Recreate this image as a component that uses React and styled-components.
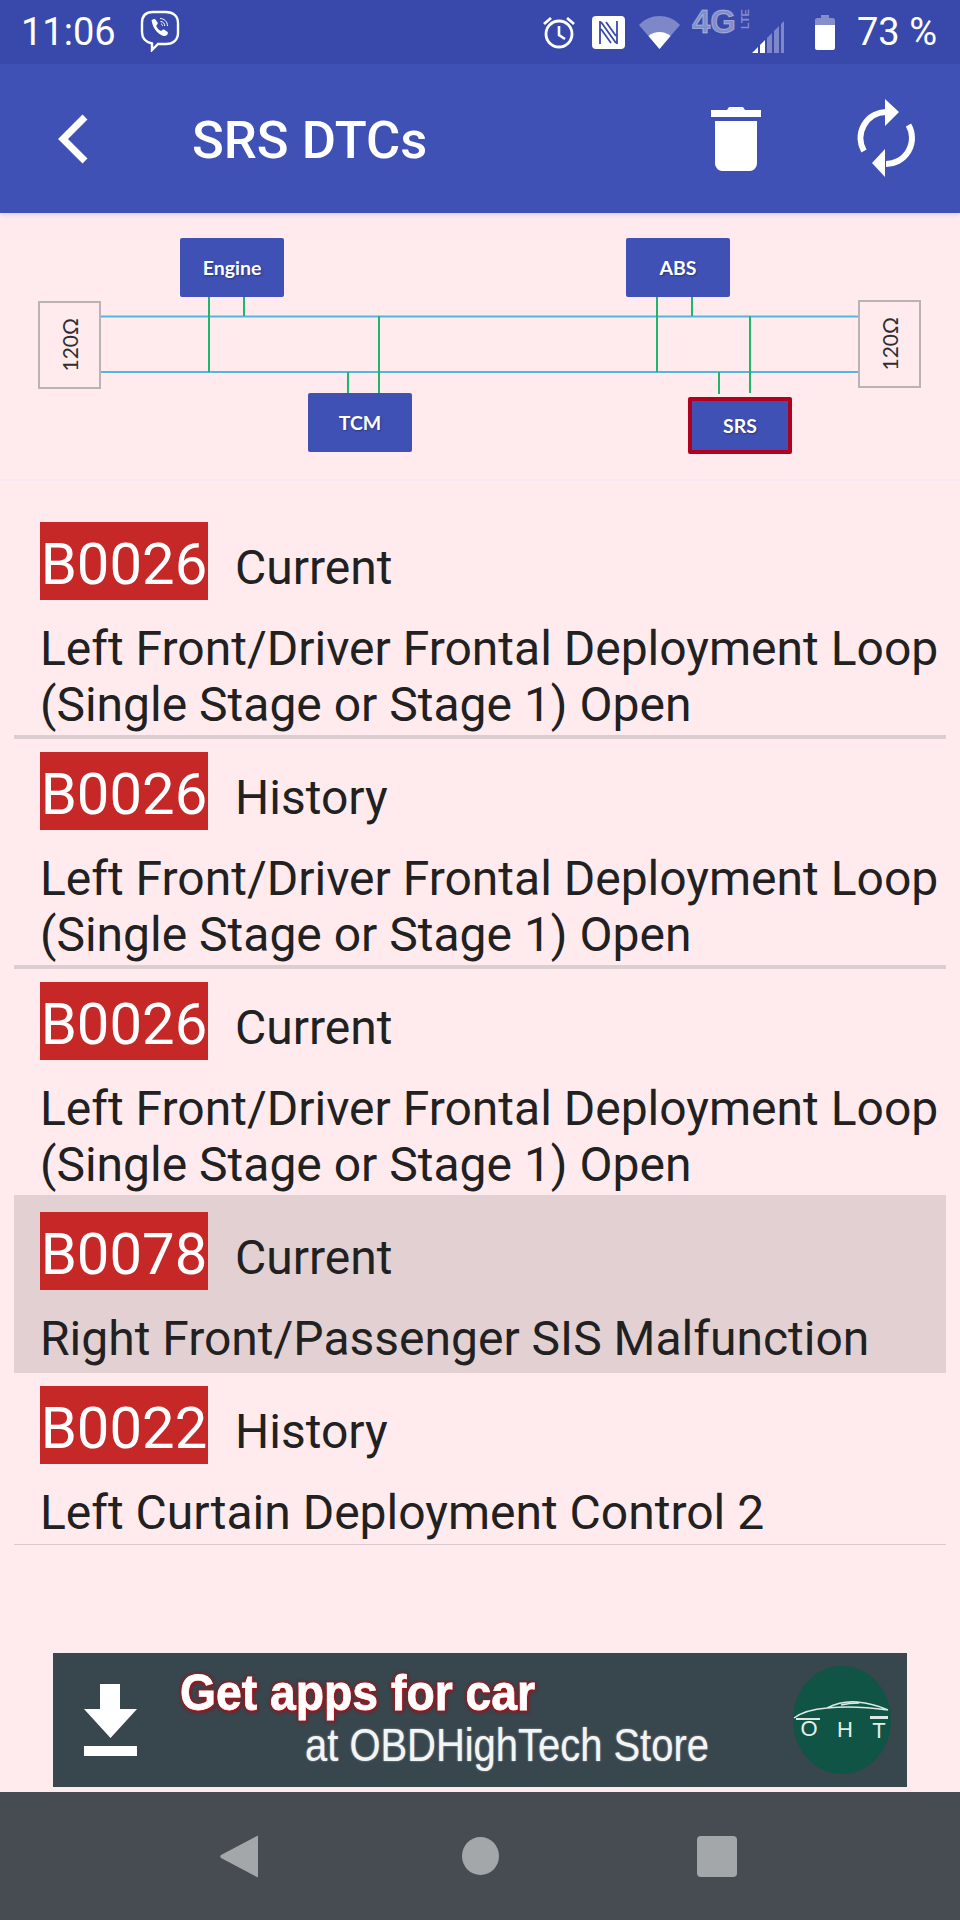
import React from 'react';
import styled, {createGlobalStyle} from 'styled-components';

const GlobalStyle = createGlobalStyle`
    html, body {
        margin: 0;
        padding: 0;
        background: #ffebee;
    }
    * {
        box-sizing: border-box;
    }`;

const Page = styled.div`
    width: 960px;
    height: 1920px;
    display: flex;
    flex-direction: column;
    overflow: hidden;
    background: #ffebee;
    color: #212121;
    font-family: Roboto, "Liberation Sans", sans-serif;`;

const StatusBar = styled.div`
    height: 64px;
    flex: none;
    display: flex;
    align-items: center;
    padding: 0 23px 0 21px;
    background: #3949ab;
    color: #fff;`;

const StatusText = styled.span`
    font-size: 38px;
    line-height: 64px;
    font-weight: 400;
    margin-left: ${p => p.$left || 0}px;`;

const StatusIcon = styled.svg`
    flex: none;
    display: block;
    margin-left: ${p => p.$left || 0}px;
    margin-top: ${p => p.$top || 0}px;`;

const Spacer = styled.div`
    flex: 1;`;

const Network = styled.div`
    display: flex;
    align-items: flex-start;
    height: 26px;
    margin-left: 12px;
    margin-top: -20px;
    color: rgba(255, 255, 255, 0.38);
    font-family: "Liberation Sans", sans-serif;
    font-weight: 700;`;

const NetworkLabel = styled.span`
    font-size: 33px;
    line-height: 26px;
    letter-spacing: 0;
    -webkit-text-stroke: 1px rgba(255, 255, 255, 0.38);`;

const NetworkSub = styled.span`
    writing-mode: vertical-rl;
    transform: rotate(180deg);
    font-size: 11px;
    line-height: 12px;
    margin-left: 3px;
    height: 26px;
    text-align: right;`;

const AppBar = styled.div`
    height: 149px;
    flex: none;
    display: flex;
    align-items: center;
    background: #3f51b5;
    color: #fff;
    box-shadow: 0 2px 5px rgba(63, 81, 181, 0.18);
    position: relative;`;

const BackButton = styled.svg`
    flex: none;
    margin-left: 56px;`;

const Title = styled.h1`
    margin: 3px 0 0 104px;
    font-size: 52.5px;
    font-weight: 500;
    line-height: 1;`;

const ActionIcon = styled.svg`
    flex: none;
    margin-left: ${p => p.$left}px;`;

const Diagram = styled.div`
    height: 268px;
    flex: none;
    position: relative;
    border-bottom: 2px solid #f4e8f2;`;

const Wires = styled.svg`
    position: absolute;
    left: 0;
    top: 0;`;

const Module = styled.div`
    position: absolute;
    left: ${p => p.$x}px;
    top: ${p => p.$y}px;
    width: 104px;
    height: ${p => (p.$active ? 57 : 59)}px;
    display: flex;
    align-items: center;
    justify-content: center;
    background: #3f51b5;
    border: ${p => (p.$active ? '4px solid #b00020' : 'none')};
    border-radius: 2px;
    color: #fff;
    font-family: Lato, "Open Sans", sans-serif;
    font-size: 19.5px;
    font-weight: 700;
    text-shadow: 1px 1px 2px rgba(0, 0, 0, 0.35);`;

const Resistor = styled.div`
    position: absolute;
    left: ${p => p.$x}px;
    top: ${p => p.$y}px;
    width: 63px;
    height: 88px;
    display: flex;
    align-items: center;
    justify-content: center;
    border: 2px solid #b9b3b4;
    font-family: Lato, "Open Sans", sans-serif;
    font-size: 21px;
    color: #2e2e2e;`;

const ResistorLabel = styled.span`
    writing-mode: vertical-rl;
    transform: rotate(180deg);`;

const List = styled.div`
    padding-top: 28px;
    flex: none;`;

const Row = styled.div`
    margin: ${p => (p.$selected ? '-4px 14px 0' : '0 14px')};
    padding: ${p => (p.$selected ? 17 : 13)}px 0 ${p => (p.$rule === 'thick' ? 2 : p.$rule === 'thin' ? 3 : 6)}px 26px;
    background: ${p => (p.$selected ? '#e2d0d3' : 'transparent')};
    border-bottom: ${p => (p.$rule === 'thick' ? '4px solid #dccdd0' : p.$rule === 'thin' ? '1px solid #d8c9cc' : 'none')};`;

const RowHead = styled.div`
    display: flex;
    align-items: center;
    height: 78px;`;

const Code = styled.span`
    width: 168px;
    height: 78px;
    padding-top: 7px;
    display: flex;
    align-items: center;
    justify-content: center;
    background: #c62828;
    color: #fff;
    font-size: 58px;
    line-height: 71px;`;

const State = styled.span`
    margin-left: 27px;
    padding-top: 13px;
    font-size: 48px;
    line-height: 65px;`;

const Description = styled.div`
    margin-top: 21px;
    font-size: 48px;
    line-height: 56px;
    white-space: nowrap;`;

const Ad = styled.div`
    width: 854px;
    height: 134px;
    flex: none;
    margin: auto auto 5px;
    display: flex;
    align-items: center;
    background: #38464e;
    color: #fff;
    font-family: "Liberation Sans", Arial, sans-serif;`;

const AdArrow = styled.svg`
    flex: none;
    margin-left: 31px;`;

const AdCopy = styled.div`
    flex: 1;
    margin-left: 43px;
    display: flex;
    flex-direction: column;`;

const AdHead = styled.span`
    margin-top: -4px;
    font-size: 50px;
    line-height: 54px;
    font-weight: 700;
    white-space: nowrap;
    transform: scaleX(0.926);
    transform-origin: left center;
    -webkit-text-stroke: 0.8px #fff;
    text-shadow: 0 0 4px #b01015, 0 0 4px #b01015, 0 0 3px #b01015, 1px 2px 4px #a50f12;`;

const AdSub = styled.span`
    margin-left: 125px;
    font-size: 46px;
    line-height: 50px;
    white-space: nowrap;
    transform: scaleX(0.868);
    transform-origin: left center;
    color: #f3f5f5;
    text-shadow: 0 0 2px rgba(255, 255, 255, 0.6);`;

const AdLogo = styled.svg`
    flex: none;
    margin-right: 16px;`;

const NavBar = styled.div`
    height: 128px;
    flex: none;
    display: flex;
    align-items: center;
    justify-content: center;
    padding-right: 4px;
    background: #464c52;`;

const NavIcon = styled.svg`
    flex: none;
    margin-left: ${p => p.$left || 0}px;`;

const LogoLetter = styled.text`
    fill: #e4efe9;
    font-family: "Liberation Sans", sans-serif;
    font-size: 22px;
    text-anchor: middle;`;

const faults = [
    {code: 'B0026', state: 'Current', text: ['Left Front/Driver Frontal Deployment Loop', '(Single Stage or Stage 1) Open'], rule: 'thick'},
    {code: 'B0026', state: 'History', text: ['Left Front/Driver Frontal Deployment Loop', '(Single Stage or Stage 1) Open'], rule: 'thick'},
    {code: 'B0026', state: 'Current', text: ['Left Front/Driver Frontal Deployment Loop', '(Single Stage or Stage 1) Open']},
    {code: 'B0078', state: 'Current', text: ['Right Front/Passenger SIS Malfunction'], selected: true},
    {code: 'B0022', state: 'History', text: ['Left Curtain Deployment Control 2'], rule: 'thin'},
];

const buses = [103.5, 159];

const stubs = [
    [209, 84, 159], [244, 84, 103], [379, 103, 180], [348, 159, 180],
    [657, 84, 159], [692, 84, 103], [750, 103, 180], [719, 159, 181],
];

export default function App() {
    return (
        <Page>
            <GlobalStyle />
            <StatusBar>
                <StatusText>11:06</StatusText>
                <StatusIcon $left={24} $top={-2} width="40" height="42" viewBox="0 0 40 42" fill="none" stroke="#fff">
                    <path d="M13 2h13c7 0 12 4 12 11v10c0 7-5 11-12 11h-8l-6 6v-6.500C5 32 2 28 2 22V13C2 6 6 2 13 2z" strokeWidth="2.400" />
                    <path d="M12 10c1-1 2.500-1.500 3.500-.5l2 3c.5 1 0 2-1 2.700-.5.500 0 1.800 1.500 3.500s3 2.500 3.600 2c.8-1 1.800-1.500 2.800-1l3 2c1 1 .5 2.500-.7 3.500-1.500 1.300-3.500 1-6-.5-3-1.800-6-5-7.500-8.500-1-2.700-1.300-4.700-1.700-6.200z" fill="#fff" stroke="none" />
                    <path d="M20 8.500c4 0 7.500 3 7.500 7.500M20.500 11.500c2.500 0 4.300 2 4.300 4.500M21 14c1 0 1.500 1 1.500 2" strokeWidth="1" />
                </StatusIcon>
                <Spacer />
                <StatusIcon width="34" height="34" viewBox="0 0 34 34" fill="none" stroke="#fff">
                    <circle cx="17" cy="19" r="13" strokeWidth="2.800" />
                    <path d="M17 11v9l6 4" strokeWidth="2.600" />
                    <path d="M2 9l7-6M32 9l-7-6" strokeWidth="2.800" />
                </StatusIcon>
                <StatusIcon $left={16} width="33" height="33" viewBox="0 0 33 33">
                    <rect width="33" height="33" rx="4" fill="#fff" />
                    <path d="M8 5v23M25 5v23M9 6l15 21M14 6l10 14M9 13l10 14" fill="none" stroke="#3949ab" strokeWidth="1.800" />
                </StatusIcon>
                <StatusIcon $left={14} width="41" height="33" viewBox="0 0 41 33">
                    <path d="M0 9C11-3 30-3 41 9L20.500 33z" fill="#fff" fillOpacity="0.35" />
                    <path d="M9.500 20c6-5.500 16-5.500 22 0L20.500 33z" fill="#fff" />
                </StatusIcon>
                <Network>
                    <NetworkLabel>4G</NetworkLabel>
                    <NetworkSub>LTE</NetworkSub>
                </Network>
                <StatusIcon $left={1} $top={8} width="33" height="33" viewBox="0 0 33 33" fill="#fff">
                    <path d="M0 33l6-6v6zM8 25l5-5v13H8z" />
                    <path d="M15 18l5-5v20h-5zM22 11l5-5v27h-5zM29 4l3-3v32h-3z" fillOpacity="0.35" />
                </StatusIcon>
                <StatusIcon $left={30} width="20" height="35" viewBox="0 0 20 35" fill="#fff">
                    <path d="M6 0h8v3h4c1 0 2 1 2 2v5H0V5c0-1 1-2 2-2h4z" fillOpacity="0.38" />
                    <path d="M0 10h20v23c0 1-1 2-2 2H2c-1 0-2-1-2-2z" />
                </StatusIcon>
                <StatusText $left={22}>73 %</StatusText>
            </StatusBar>

            <AppBar>
                <BackButton width="32" height="50" viewBox="0 0 32 50" fill="none" stroke="#fff" strokeWidth="7">
                    <path d="M29 3L7 25l22 22" />
                </BackButton>
                <Title>SRS DTCs</Title>
                <ActionIcon $left={284} width="50" height="64" viewBox="0 0 50 64" fill="#fff">
                    <path d="M0 3h16l2-3h14l2 3h16v7H0z" />
                    <path d="M4 14h42v42c0 4-3 8-7 8H11c-4 0-7-4-7-8z" />
                </ActionIcon>
                <ActionIcon $left={95} width="60" height="84" viewBox="0 0 60 84" fill="#fff">
                    <path d="M8 54A26 26 0 0 1 30 15" fill="none" stroke="#fff" strokeWidth="6" />
                    <path d="M52.500 28A26 26 0 0 1 30 67" fill="none" stroke="#fff" strokeWidth="6" />
                    <path d="M29 2l14 13-14 14zM29 52L16 66l13 14z" />
                </ActionIcon>
            </AppBar>

            <Diagram>
                <Wires width="960" height="266" viewBox="0 0 960 266" fill="none">
                    {buses.map(y => <path key={y} d={`M101 ${y}H858`} stroke="#53b7dc" strokeWidth="2" />)}
                    {stubs.map(([x, from, to]) => <path key={`${x}-${from}`} d={`M${x} ${from}V${to}`} stroke="#1fb56c" strokeWidth="2" />)}
                </Wires>
                <Resistor $x={38} $y={88}><ResistorLabel>120Ω</ResistorLabel></Resistor>
                <Resistor $x={858} $y={87}><ResistorLabel>120Ω</ResistorLabel></Resistor>
                <Module $x={180} $y={25}>Engine</Module>
                <Module $x={626} $y={25}>ABS</Module>
                <Module $x={308} $y={180}>TCM</Module>
                <Module $x={688} $y={184} $active>SRS</Module>
            </Diagram>

            <List>
                {faults.map((fault, i) => (
                    <Row key={i} $selected={fault.selected} $rule={fault.rule}>
                        <RowHead>
                            <Code>{fault.code}</Code>
                            <State>{fault.state}</State>
                        </RowHead>
                        <Description>
                            {fault.text.map(line => <div key={line}>{line}</div>)}
                        </Description>
                    </Row>
                ))}
            </List>

            <Ad>
                <AdArrow width="53" height="72" viewBox="0 0 53 72" fill="#fff">
                    <path d="M16 0h20v25h17L26.500 54 0 25h16zM0 62h53v10H0z" />
                </AdArrow>
                <AdCopy>
                    <AdHead>Get apps for car</AdHead>
                    <AdSub>at OBDHighTech Store</AdSub>
                </AdCopy>
                <AdLogo width="98" height="108" viewBox="0 0 98 108">
                    <ellipse cx="49" cy="54" rx="49" ry="54" fill="#0f5444" />
                    <path d="M1 52c8-6 20-9 33-10 8-4 18-7 30-6 12 1 22 4 31 8M34 42c18-2 40-1 61 2M48 39c4-1 12-2 18-2" fill="none" stroke="#dce9e3" strokeWidth="1.500" />
                    <path d="M77 50h18v3H77zM3 52h24v2H3z" fill="#dce9e3" />
                    <LogoLetter x="16" y="70">O</LogoLetter>
                    <LogoLetter x="52" y="71">H</LogoLetter>
                    <LogoLetter x="86" y="72">T</LogoLetter>
                </AdLogo>
            </Ad>

            <NavBar>
                <NavIcon width="38" height="43" viewBox="0 0 38 43" fill="#a4a7aa">
                    <path d="M37 1c.6-.6 1-.3 1 .5v40c0 .8-.4 1.100-1 .5L1 23c-1-1-1-2 0-3z" />
                </NavIcon>
                <NavIcon $left={204} width="37" height="38" viewBox="0 0 37 38" fill="#a4a7aa">
                    <ellipse cx="18.500" cy="19" rx="18.500" ry="19" />
                </NavIcon>
                <NavIcon $left={198} width="40" height="41" viewBox="0 0 40 41" fill="#a4a7aa">
                    <rect width="40" height="41" rx="4" />
                </NavIcon>
            </NavBar>
        </Page>
    );
}
